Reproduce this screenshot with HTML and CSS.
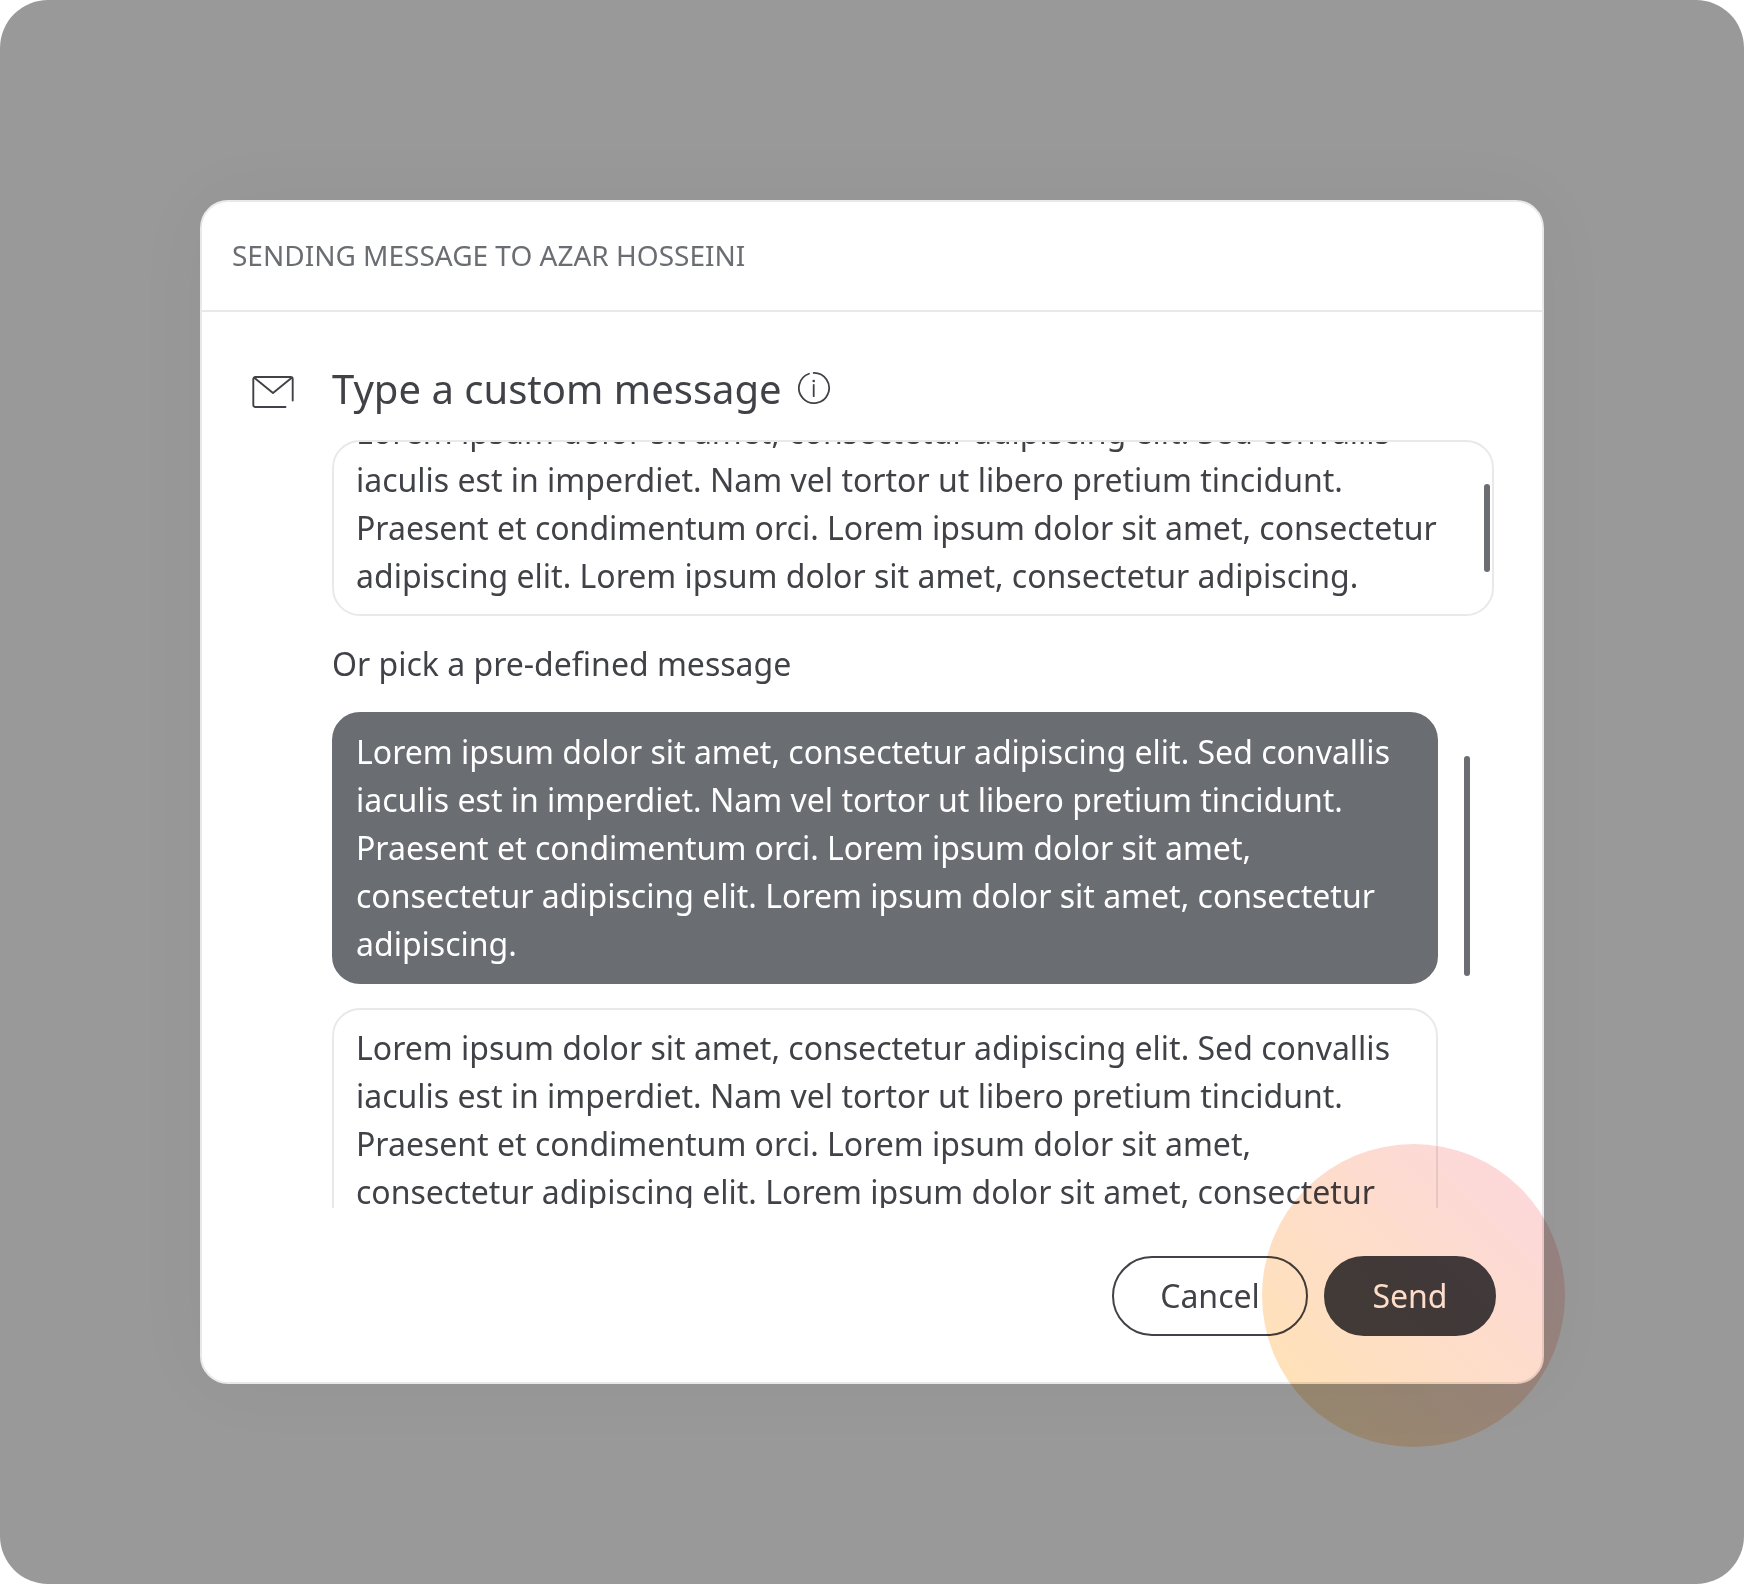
FILE: index.html
```html
<!DOCTYPE html>
<html lang="en">
<head>
<meta charset="utf-8">
<title>Send message</title>
<link rel="stylesheet" href="styles.css">
</head>
<body>
<main class="backdrop">
  <section class="dialog" role="dialog">
    <header class="dialog-header">SENDING MESSAGE TO AZAR HOSSEINI</header>
    <div class="dialog-body">
      <svg class="mail-icon" viewBox="0 0 44 34" fill="none" stroke="currentColor" stroke-width="1.900" stroke-linecap="round" stroke-linejoin="round">
        <path d="M33.500 32H3.300a2 2 0 0 1-2-2V4a2 2 0 0 1 2-2H38.700a2 2 0 0 1 2 2V25.500M2 2.600L21 18L40 2.600"/>
      </svg>
      <div class="content">
        <div class="title-row">
          <h1 class="title">Type a custom message</h1>
          <svg class="info-icon" viewBox="0 0 34 34" fill="none" stroke="currentColor" stroke-width="1.800" stroke-linecap="round">
            <path d="M15.700 1.900A15.100 15.100 0 1 1 11 2.750"/>
            <path d="M15.700 14V25.200"/>
            <circle cx="15.700" cy="10" r="1.300" fill="currentColor" stroke="none"/>
          </svg>
        </div>
        <div class="message-input">
          <p class="input-text">Lorem ipsum dolor sit amet, consectetur adipiscing elit. Sed convallis iaculis est in imperdiet. Nam vel tortor ut libero pretium tincidunt. Praesent et condimentum orci. Lorem ipsum dolor sit amet, consectetur adipiscing elit. Lorem ipsum dolor sit amet, consectetur adipiscing.</p>
          <span class="thumb input-thumb"></span>
        </div>
        <h2 class="subtitle">Or pick a pre-defined message</h2>
        <div class="presets">
          <div class="preset-list">
            <p class="preset selected">Lorem ipsum dolor sit amet, consectetur adipiscing elit. Sed convallis iaculis est in imperdiet. Nam vel tortor ut libero pretium tincidunt. Praesent et condimentum orci. Lorem ipsum dolor sit amet, consectetur adipiscing elit. Lorem ipsum dolor sit amet, consectetur adipiscing.</p>
            <p class="preset">Lorem ipsum dolor sit amet, consectetur adipiscing elit. Sed convallis iaculis est in imperdiet. Nam vel tortor ut libero pretium tincidunt. Praesent et condimentum orci. Lorem ipsum dolor sit amet, consectetur adipiscing elit. Lorem ipsum dolor sit amet, consectetur</p>
          </div>
          <span class="thumb list-thumb"></span>
        </div>
      </div>
    </div>
    <footer class="actions">
      <button class="button">Cancel</button>
      <button class="button primary">Send</button>
    </footer>
  </section>
  <div class="tap-highlight"></div>
</main>
</body>
</html>
```
FILE: styles.css
```css
* {
  box-sizing: border-box;
}

body {
  margin: 0;
  background: #fff;
  color: #414247;
  font: 32px/48px "Noto Sans", sans-serif;
}

h1,
h2,
p {
  margin: 0;
  font-weight: 400;
}

.backdrop {
  position: relative;
  width: 1744px;
  height: 1584px;
  padding: 200px;
  border-radius: 48px;
  background: #999;
  overflow: hidden;
}

.dialog {
  display: flex;
  flex-direction: column;
  height: 1184px;
  border: 2px solid #e9e9e9;
  border-radius: 28px;
  background: #fff;
  box-shadow: 0 0 80px rgba(0, 0, 0, 0.04);
}

.dialog-header {
  height: 110px;
  padding: 29px 30px;
  border-bottom: 2px solid #e9e9e9;
  color: #6a6d72;
  font-size: 28px;
}

.dialog-body {
  display: flex;
  padding: 48px 48px 0 50px;
}

.mail-icon {
  flex: none;
  width: 44px;
  height: 34px;
  margin: 15px 36px 0 0;
}

.content {
  flex: 1;
}

.title-row {
  display: flex;
  align-items: center;
  gap: 16px;
  height: 60px;
}

.title {
  margin-top: -2px;
  font-size: 40px;
}

.info-icon {
  width: 34px;
  height: 34px;
  margin-top: -4px;
}

.message-input {
  position: relative;
  display: flex;
  align-items: flex-end;
  width: 1162px;
  height: 176px;
  margin-top: 20px;
  padding: 0 50px 14px 22px;
  border: 2px solid #e9e9e9;
  border-radius: 28px;
  overflow: hidden;
}

.thumb {
  width: 6px;
  border-radius: 3px;
  background: #6a6d72;
}

.input-thumb {
  position: absolute;
  top: 42px;
  right: 2px;
  height: 88px;
}

.subtitle {
  margin: 24px 0;
  font-size: 32px;
}

.presets {
  display: flex;
  gap: 26px;
  height: 496px;
  overflow: hidden;
}

.preset-list {
  display: flex;
  flex-direction: column;
  gap: 24px;
  width: 1106px;
}

.preset {
  flex: none;
  height: 272px;
  padding: 14px 22px;
  border: 2px solid #e9e9e9;
  border-radius: 28px;
}

.preset.selected {
  border-color: #6a6d72;
  background: #6a6d72;
  color: #fff;
}

.list-thumb {
  height: 220px;
  margin-top: 44px;
}

.actions {
  display: flex;
  justify-content: flex-end;
  gap: 16px;
  padding: 48px 46px 0;
}

.button {
  width: 196px;
  height: 80px;
  padding: 0;
  border: 2px solid #414247;
  border-radius: 40px;
  background: #fff;
  color: #414247;
  font: inherit;
}

.primary {
  width: 172px;
  background: #414247;
  color: #fff;
}

.tap-highlight {
  position: absolute;
  left: 1262px;
  top: 1144px;
  width: 303px;
  height: 303px;
  border-radius: 50%;
  background: linear-gradient(45deg, #ffe2b6 10%, #fcd8dc 90%);
  mix-blend-mode: multiply;
}
```
